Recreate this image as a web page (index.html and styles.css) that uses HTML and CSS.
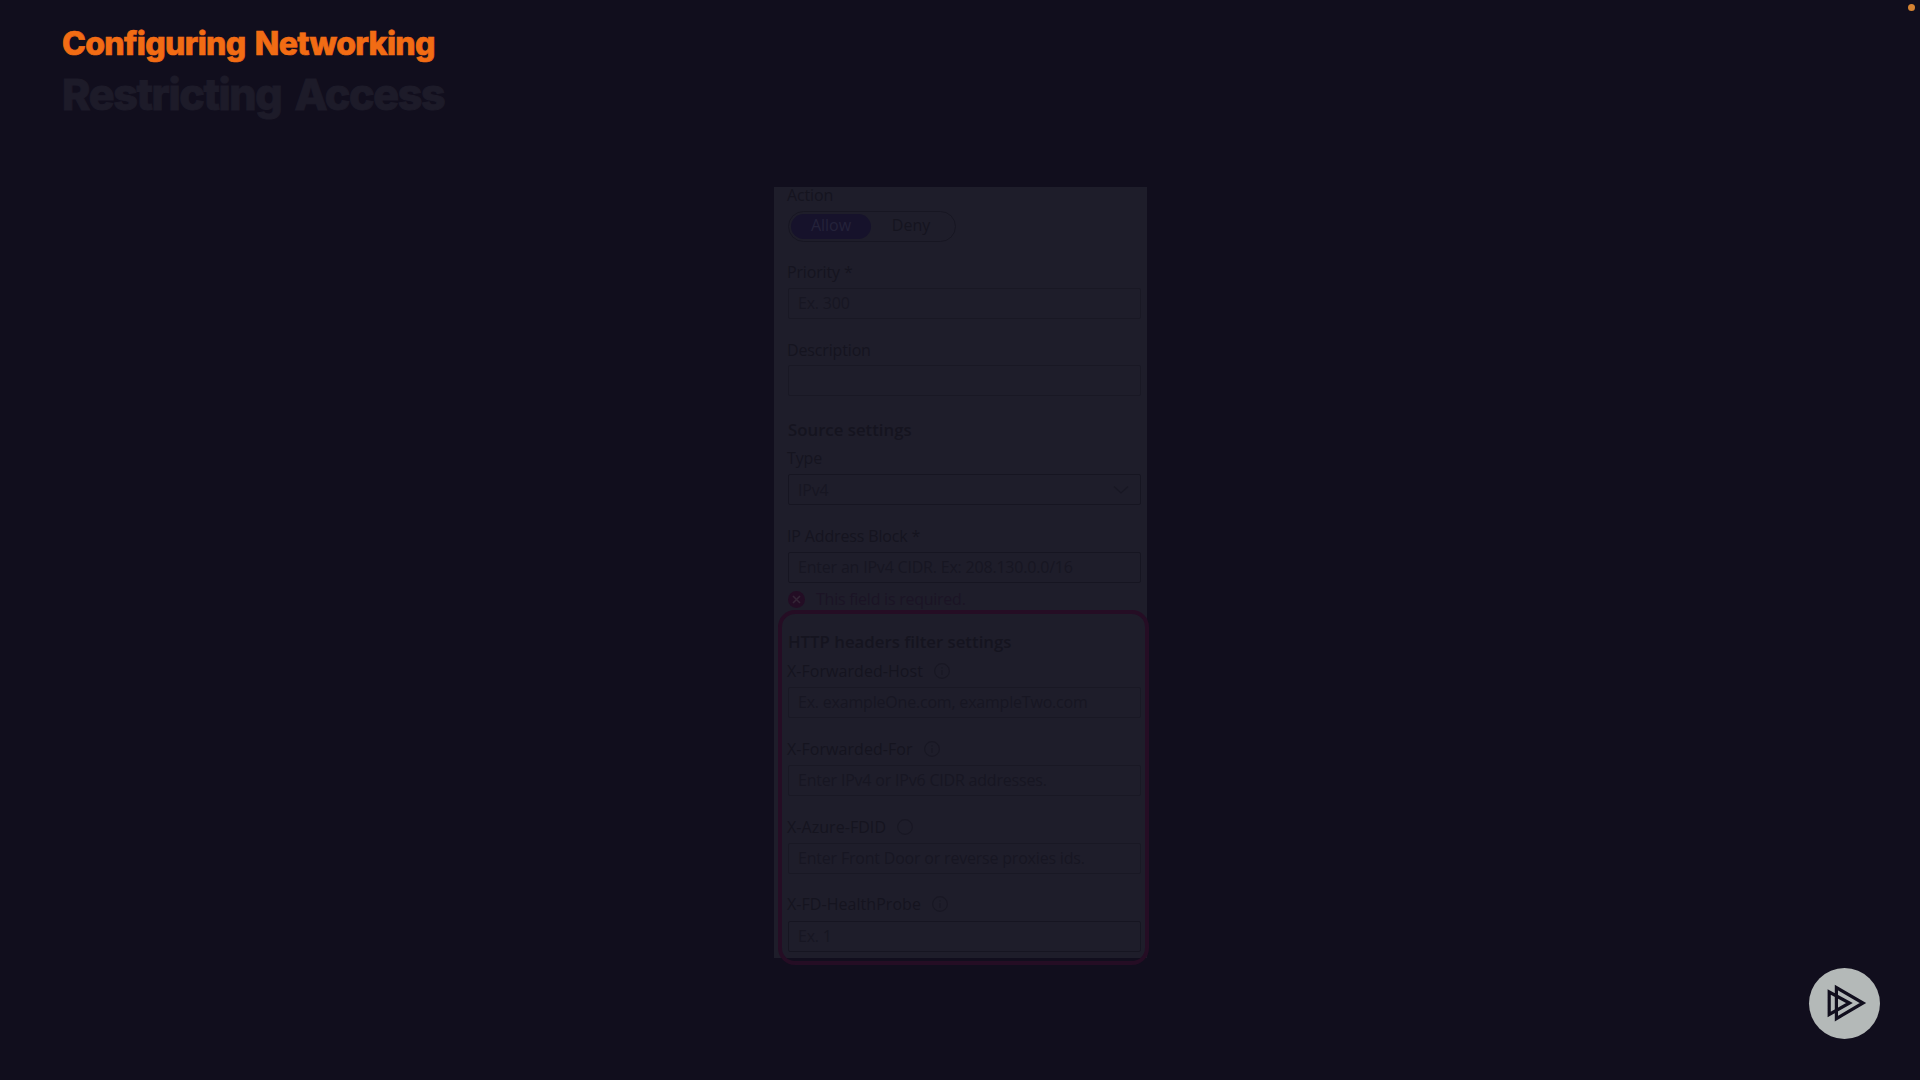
FILE: index.html
```
<!DOCTYPE html>
<html lang="en">
<head>
<meta charset="utf-8">
<title>Configuring Networking</title>
<link rel="stylesheet" href="styles.css">
</head>
<body>
<header class="titles">
  <h1 class="module">Configuring Networking</h1>
  <h2 class="topic">Restricting Access</h2>
</header>
<span class="rec-dot"></span>

<main class="panel">
  <div class="clip">
    <div class="group action">
      <div class="label">Action</div>
      <div class="toggle"><span class="option selected">Allow</span><span class="option">Deny</span></div>
    </div>
    <div class="group priority">
      <div class="label">Priority *</div>
      <div class="field">Ex. 300</div>
    </div>
    <div class="group description">
      <div class="label">Description</div>
      <div class="field"></div>
    </div>
    <h3 class="heading source">Source settings</h3>
    <div class="group type">
      <div class="label">Type</div>
      <div class="field strong select">IPv4
        <svg class="chevron" width="16" height="10" viewBox="0 0 16 10"><path d="M1 1.5l7 6.5 7-6.5"/></svg>
      </div>
    </div>
    <div class="group address">
      <div class="label">IP Address Block *</div>
      <div class="field strong">Enter an IPv4 CIDR. Ex: 208.130.0.0/16</div>
      <div class="error">
        <svg width="17" height="17" viewBox="0 0 17 17"><circle class="error-disc" cx="8.5" cy="8.5" r="8.5"/><path class="error-cross" d="M5 5l7 7M12 5l-7 7"/></svg>
        <span>This field is required.</span>
      </div>
    </div>
    <h3 class="heading http">HTTP headers filter settings</h3>
    <div class="group host">
      <div class="label wide">X-Forwarded-Host <svg class="info" width="16" height="16" viewBox="0 0 16 16"><circle cx="8" cy="8" r="7.4"/><path d="M8 4.2v1.2M8 7v5"/></svg></div>
      <div class="field">Ex. exampleOne.com, exampleTwo.com</div>
    </div>
    <div class="group for">
      <div class="label wide">X-Forwarded-For <svg class="info" width="16" height="16" viewBox="0 0 16 16"><circle cx="8" cy="8" r="7.4"/><path d="M8 4.2v1.2M8 7v5"/></svg></div>
      <div class="field">Enter IPv4 or IPv6 CIDR addresses.</div>
    </div>
    <div class="group fdid">
      <div class="label wide">X-Azure-FDID <svg class="info" width="16" height="16" viewBox="0 0 16 16"><circle cx="8" cy="8" r="7.4"/></svg></div>
      <div class="field">Enter Front Door or reverse proxies ids.</div>
    </div>
    <div class="group probe">
      <div class="label wide">X-FD-HealthProbe <svg class="info" width="16" height="16" viewBox="0 0 16 16"><circle cx="8" cy="8" r="7.4"/><path d="M8 4.2v1.2M8 7v5"/></svg></div>
      <div class="field strong">Ex. 1</div>
    </div>
  </div>
  <div class="highlight"></div>
</main>

<svg class="logo" width="72" height="72" viewBox="0 0 72 72">
  <circle class="logo-disc" cx="36.5" cy="36.5" r="35.5"/>
  <path class="logo-mark" d="M21.2 25v22.4L41.5 36zM28.4 20.6v31L55 36z"/>
</svg>
</body>
</html>
```
FILE: styles.css
```
* { box-sizing: border-box; }

body {
  margin: 0;
  width: 1920px;
  height: 1080px;
  overflow: hidden;
  position: relative;
  background: #110e1d;
  font-family: "Open Sans", "Noto Sans", sans-serif;
  font-size: 16px;
  color: #15141f;
}

h1, h2, h3 { margin: 0; }

.titles {
  height: 187px;
  padding: 24px 0 0 62px;
  font-family: Inter, sans-serif;
  white-space: nowrap;
}

.module {
  font-size: 32px;
  line-height: 40px;
  font-weight: 800;
  letter-spacing: -0.65px;
  word-spacing: 3px;
  color: #f26c14;
  -webkit-text-stroke: 0.7px #f26c14;
}

.topic {
  margin-top: 4px;
  font-size: 43px;
  line-height: 52px;
  font-weight: 800;
  letter-spacing: -1.35px;
  word-spacing: 5px;
  color: #1d1b29;
  -webkit-text-stroke: 1px #1d1b29;
}

.rec-dot {
  position: absolute;
  left: 1908px;
  top: 4px;
  width: 7px;
  height: 7px;
  border-radius: 50%;
  background: #d58332;
}

.panel {
  position: relative;
  width: 373px;
  height: 771px;
  margin-left: 774px;
}

.clip {
  height: 771px;
  padding: 0 6px 0 14px;
  background: #1e1d2a;
}

.label {
  display: flex;
  align-items: center;
  gap: 11px;
  height: 24px;
  margin-left: -1px;
  line-height: 24px;
  letter-spacing: -0.15px;
}

.label.wide { letter-spacing: 0.05px; }

.action .label {
  height: 20px;
  line-height: 16px;
  align-items: flex-start;
}

.field {
  height: 31px;
  margin-top: 4px;
  padding-left: 9px;
  border: 1px solid #191824;
  border-radius: 2px;
  line-height: 28px;
  letter-spacing: -0.2px;
  color: #171622;
  white-space: nowrap;
}

.field.strong { border-color: #161521; }

.select {
  display: flex;
  align-items: center;
  justify-content: space-between;
  padding-right: 11px;
}

.heading {
  height: 24px;
  font-size: 16.8px;
  line-height: 24px;
  font-weight: 600;
}

.toggle {
  display: flex;
  width: 168px;
  height: 31px;
  margin-top: 4px;
  padding: 2px;
  border: 1px solid #171622;
  border-radius: 16px;
}

.option {
  width: 80px;
  height: 25px;
  border-radius: 13px;
  line-height: 23px;
  text-align: center;
}

.option.selected {
  background: #16122b;
  color: #24223a;
}

.priority { margin-top: 18px; }
.description { margin-top: 19px; }
.description .field { margin-top: 3px; }
.source { margin-top: 22px; }
.type { margin-top: 4px; }
.address { margin-top: 19px; }
.http { margin-top: 19px; }
.host { margin-top: 5px; }
.for { margin-top: 19px; }
.fdid { margin-top: 19px; }
.probe { margin-top: 18px; }
.probe .field { margin-top: 5px; }

.error {
  display: flex;
  align-items: center;
  gap: 11px;
  height: 24px;
  margin-top: 4px;
  letter-spacing: -0.25px;
  color: #1b1425;
}

.error-disc { fill: #230d24; }
.error-cross { fill: none; stroke: #342536; stroke-width: 1.6; }

.info { fill: none; stroke: #181723; stroke-width: 1.1; }

.chevron { fill: none; stroke: #181723; stroke-width: 1.2; }

.highlight {
  position: absolute;
  left: 4px;
  top: 423px;
  width: 371px;
  height: 355px;
  border: 4px solid #250d24;
  border-radius: 17px;
}

.logo {
  position: absolute;
  left: 1808px;
  top: 967px;
}

.logo-disc { fill: #b4b9b8; }
.logo-mark { fill: none; stroke: #110e1d; stroke-width: 3.2; }
```
